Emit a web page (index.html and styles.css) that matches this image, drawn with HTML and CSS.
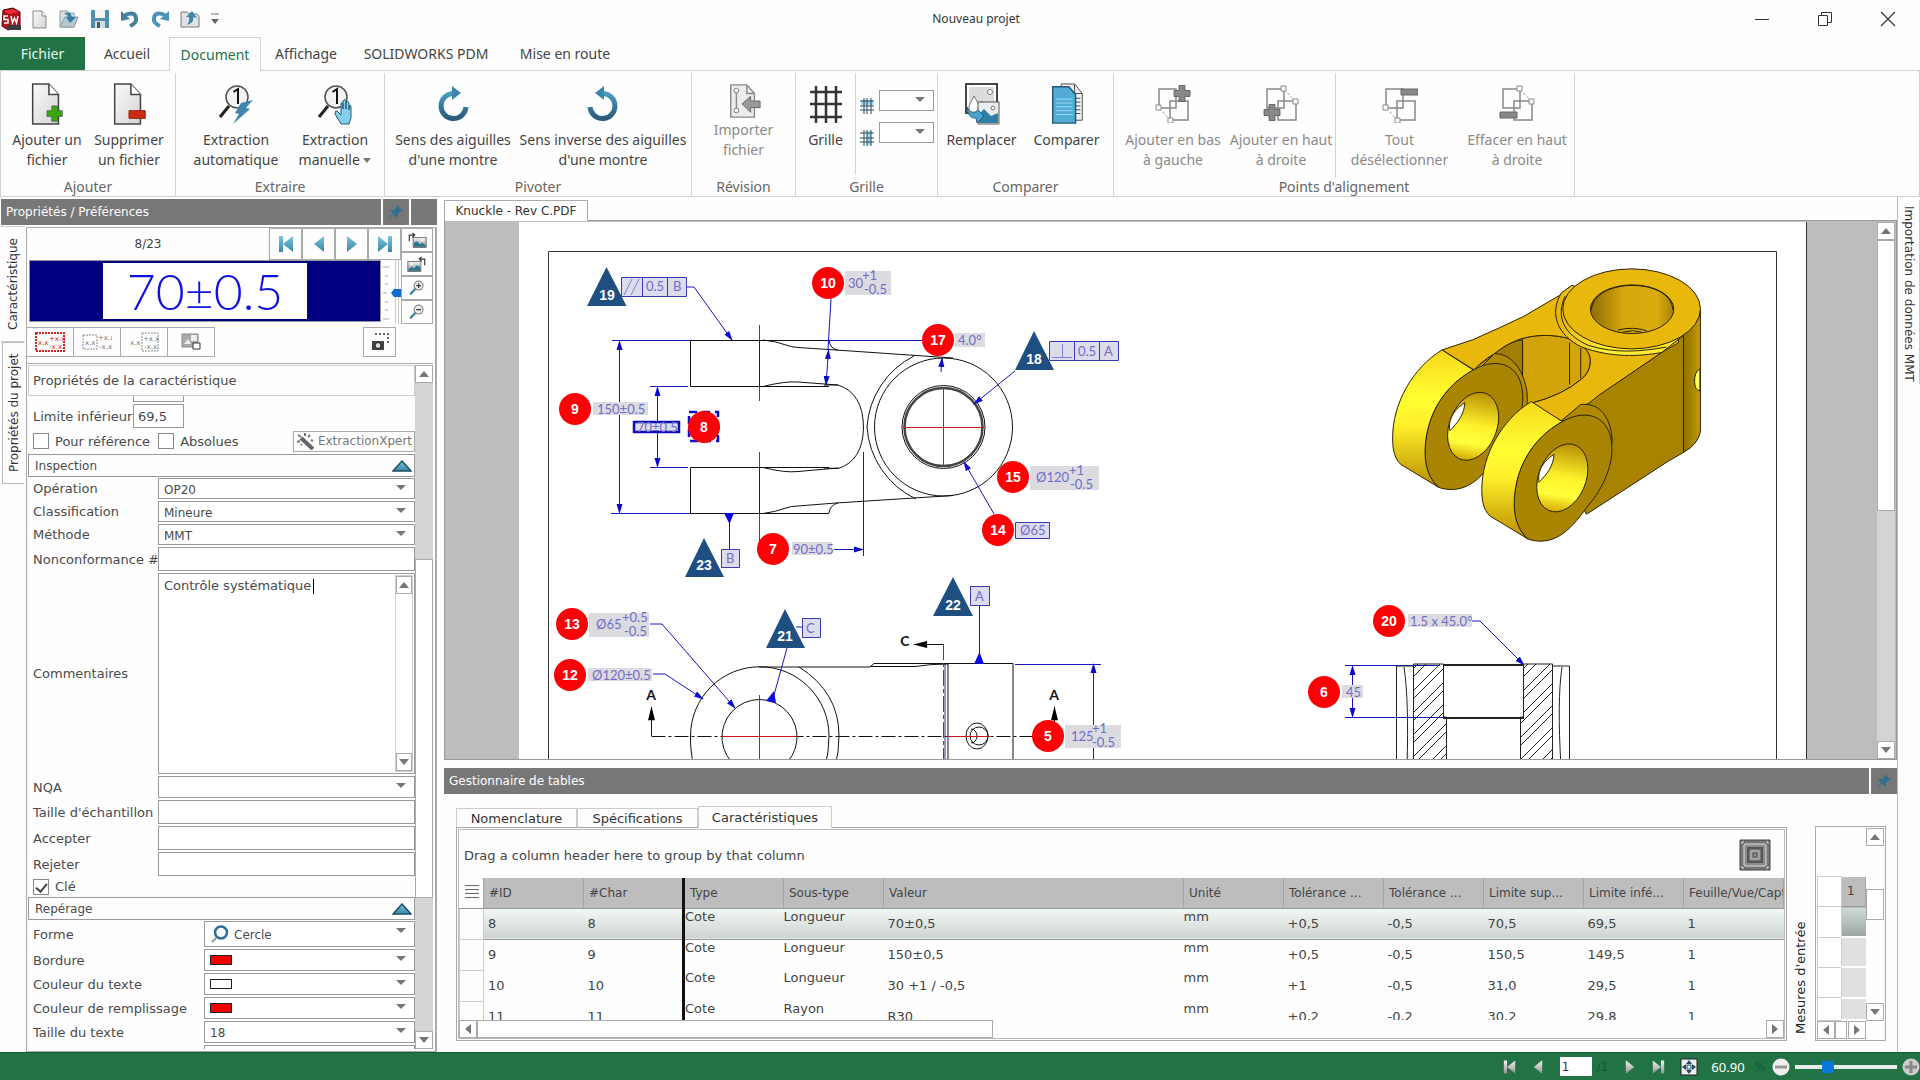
FILE: index.html
```html
<!DOCTYPE html>
<html lang="fr">
<head>
<meta charset="utf-8">
<title>Nouveau projet</title>
<link rel="stylesheet" href="styles.css">
</head>
<body>
<svg class="defs" width="0" height="0" aria-hidden="true">
  <defs>
    <linearGradient id="paper" x1="0" y1="0" x2="1" y2="1"><stop offset="0" stop-color="#fafafa"/><stop offset="1" stop-color="#d4d4d4"/></linearGradient>
    <linearGradient id="steel" x1="0" y1="0" x2="0" y2="1"><stop offset="0" stop-color="#4a9cc0"/><stop offset="1" stop-color="#2b5a78"/></linearGradient>
    <linearGradient id="sky" x1="0" y1="0" x2="0" y2="1"><stop offset="0" stop-color="#7cc4dd"/><stop offset="1" stop-color="#3a86a8"/></linearGradient>
    <linearGradient id="silver" x1="0" y1="0" x2="0" y2="1"><stop offset="0" stop-color="#f4f4f4"/><stop offset="1" stop-color="#8f8f8f"/></linearGradient>
    <linearGradient id="gold" x1="0" y1="0" x2="0" y2="1"><stop offset="0" stop-color="#f6d818"/><stop offset=".35" stop-color="#ffff32"/><stop offset=".55" stop-color="#fff02a"/><stop offset="1" stop-color="#b98c00"/></linearGradient>
    <linearGradient id="bore" x1="0" y1="0" x2="0" y2="1"><stop offset="0" stop-color="#b88f04"/><stop offset=".5" stop-color="#fff42c"/><stop offset=".75" stop-color="#ffff3c"/><stop offset="1" stop-color="#d6a800"/></linearGradient>
    <linearGradient id="cyl"><stop offset="0" stop-color="#8c6c00"/><stop offset=".4" stop-color="#d6a80c"/><stop offset=".8" stop-color="#d9ab0c"/><stop offset="1" stop-color="#a68200"/></linearGradient>
    <linearGradient id="edge"><stop offset="0" stop-color="#8f6f00"/><stop offset="1" stop-color="#c39a08"/></linearGradient>
    <linearGradient id="fillet"><stop offset="0" stop-color="#e3b20a"/><stop offset=".4" stop-color="#fff23a"/><stop offset="1" stop-color="#ffe52a"/></linearGradient>
    <marker id="arrow" viewBox="0 0 10 6" refX="9" refY="3" markerWidth="10" markerHeight="7" markerUnits="userSpaceOnUse" orient="auto-start-reverse"><path d="M0 0L10 3L0 6z" fill="#0a0ac8"/></marker>
    <marker id="arrow-black" viewBox="0 0 16 8" refX="15" refY="4" markerWidth="16" markerHeight="7" markerUnits="userSpaceOnUse" orient="auto"><path d="M0 0L16 4L0 8z"/></marker>
    <pattern id="hatch" width="22" height="22" patternUnits="userSpaceOnUse"><path d="M-1 23L23 -1M-1 15L15 -1M13 23L23 13" stroke="#222" fill="none"/></pattern>
  </defs>
  <symbol id="i-doc" viewBox="0 0 36 44"><path d="M3 1H20L30 12V43H3z" fill="url(#paper)" stroke="#444" stroke-width="1.6"/><path d="M20 1V12H30" fill="#fff" stroke="#444" stroke-width="1.6"/></symbol>
  <symbol id="i-loupe" viewBox="0 0 36 42"><circle cx="19" cy="14" r="11" fill="#f2f2f2" stroke="#555" stroke-width="1.6"/><path d="M11 23L2 34" stroke="#222" stroke-width="3"/><path d="M15.500 9L20 6V21" fill="none" stroke="#111" stroke-width="2"/></symbol>
  <symbol id="i-rotate" viewBox="0 0 32 38"><path d="M16 8.500A12.500 12.500 0 1 0 29 22" fill="none" stroke="url(#steel)" stroke-width="5"/><path d="M15 1L24 8L15 15z" fill="#3a87ab"/></symbol>
  <symbol id="i-align" viewBox="0 0 36 38"><path d="M4 4H21V23H4zM15 16H33V35H15z" fill="none" stroke="#888" stroke-width="1.500"/><path d="M4 23L16 36" stroke="#999" stroke-dasharray="3 2"/><path d="M1 20h5v5H1zM13 33h5v5h-5z" fill="#fff" stroke="#888"/></symbol>
  <symbol id="i-align2" viewBox="0 0 36 38"><path d="M4 4H21V23H4zM15 16H33V35H15z" fill="none" stroke="#888" stroke-width="1.500"/><path d="M21 4L33 17" stroke="#999" stroke-dasharray="3 2"/><path d="M18 1h5v5h-5zM30 14h5v5h-5z" fill="#fff" stroke="#888"/></symbol>
  <symbol id="i-plus" viewBox="0 0 18 18"><path d="M6 1h6v5h5v6h-5v5H6v-5H1V6h5z" stroke="#555" stroke-width=".8"/></symbol>
  <symbol id="i-pin" viewBox="0 0 16 16"><path d="M9 1L15 7L12.500 7.500L10 10L9.500 14L6 10.500L1 15L5 9.500L2 6L6 6L8.500 3.500z" fill="#2f6f90"/></symbol>
  <symbol id="i-next" viewBox="0 0 12 18"><path d="M1 1L11 9L1 17z"/></symbol>
  <symbol id="i-last" viewBox="0 0 16 18"><path d="M1 1L11 9L1 17zM11 1h4v16h-4z"/></symbol>
  <symbol id="i-photo" viewBox="0 0 26 20"><path d="M8 6H25V19H8z" fill="url(#silver)" stroke="#555"/><path d="M9 18V13L13 11L17 15L20 13L24 16V18z" fill="#2f7692"/><circle cx="20" cy="9.500" r="1.500" fill="#fff"/><path d="M3 11V3H9M7 0L10 3L7 6" fill="none" stroke="#333" stroke-width="1.500"/></symbol>
  <symbol id="i-zoom" viewBox="0 0 20 20"><circle cx="12" cy="7" r="5.500" fill="#e8eef0" stroke="#888" stroke-width="1.500"/><path d="M8 11L1.500 18" stroke="#46809a" stroke-width="3"/><path d="M9 7h6" stroke="#333" stroke-width="1.500"/></symbol>
</svg>

<header class="titlebar">
  <div class="quick">
    <svg width="22" height="24" viewBox="0 0 22 24"><path d="M3 3L13 1L20 5V20L8 23L2 19z" fill="#b3121a" stroke="#520508"/><path d="M4 4L13 2L19 5L9 7z" fill="#ee2b2f"/><path d="M8 9H4V12.500H8V16H4M11 9L12.500 16L14.500 11L16.500 16L18 9" fill="none" stroke="#fff" stroke-width="1.500"/><path d="M8 18H21V23H8z" fill="#3a3a3a"/></svg>
    <button aria-label="Nouveau"><svg width="16" height="20" viewBox="0 0 16 20"><path d="M1 2H10L14 7V19H1z" fill="url(#paper)" stroke="#888"/><path d="M10 2V7H14" fill="#fff" stroke="#888"/></svg></button>
    <button aria-label="Ouvrir"><svg width="22" height="20" viewBox="0 0 22 20"><path d="M2 2H9L11 4H16V18H2z" fill="#d8dde0" stroke="#8a9aa3"/><path d="M2 18L7 8H20L16 18z" fill="#b9c8d0" stroke="#8a9aa3"/><path d="M6 5Q12 1 14 8H18L12 14L8 8H10Q10 5 6 5" fill="#2f7ea3"/></svg></button>
    <button aria-label="Enregistrer"><svg width="20" height="20" viewBox="0 0 20 20"><path d="M1 1H19V19H1z" fill="#4f8fb0"/><path d="M5 1H15V9H5z" fill="#f2f4f5"/><path d="M5 12H15V19H5z" fill="#d5dde0"/><path d="M7 13H10V19H7z" fill="#335f77"/></svg></button>
    <button aria-label="Annuler"><svg width="20" height="18" viewBox="0 0 20 18"><path d="M5 5Q15 1 16 8Q17 13 10 16" fill="none" stroke="#46809f" stroke-width="4"/><path d="M1 1L1 11L10 9z" fill="#46809f"/></svg></button>
    <button aria-label="Rétablir"><svg class="flip" width="20" height="18" viewBox="0 0 20 18"><path d="M5 5Q15 1 16 8Q17 13 10 16" fill="none" stroke="#4a93b8" stroke-width="4"/><path d="M1 1L1 11L10 9z" fill="#4a93b8"/></svg></button>
    <button aria-label="Recharger"><svg width="20" height="18" viewBox="0 0 20 18"><path d="M1 2H7L9 4H17L19 6V17H1z" fill="#dfe3e5" stroke="#777"/><path d="M7 15Q15 12 13 7L17 8L12 1L6 7H9Q10 11 7 15" fill="#3d86a8"/></svg></button>
    <button aria-label="Personnaliser"><svg width="10" height="12" viewBox="0 0 10 12"><path d="M1 1H9" stroke="#777"/><path d="M1 6H9L5 11z" fill="#666"/></svg></button>
  </div>
  <h1 class="app-title">Nouveau projet</h1>
  <div class="winbtns">
    <button aria-label="Réduire"><svg width="16" height="16" viewBox="0 0 16 16"><path d="M1 8.500H15" stroke="#333"/></svg></button>
    <button aria-label="Restaurer"><svg width="16" height="16" viewBox="0 0 16 16"><path d="M1.500 4.500H10.500V14.500H1.500zM4.500 4V1.500H14.500V11.500H11" fill="none" stroke="#333"/></svg></button>
    <button aria-label="Fermer"><svg width="16" height="16" viewBox="0 0 16 16"><path d="M1 1L15 15M15 1L1 15" stroke="#333" stroke-width="1.200"/></svg></button>
  </div>
</header>

<nav class="tabs">
  <a href="#" class="tab file">Fichier</a><a href="#" class="tab home">Accueil</a><a href="#" class="tab current">Document</a><a href="#" class="tab view">Affichage</a><a href="#" class="tab pdm">SOLIDWORKS PDM</a><a href="#" class="tab start">Mise en route</a>
</nav>

<section class="ribbon">
  <div class="group g-add">
    <div class="tools">
      <button class="tool w82"><svg width="36" height="44" viewBox="0 0 36 44"><use href="#i-doc"/><g fill="#3aa80c"><use href="#i-plus" x="17" y="22" width="18" height="20"/></g></svg>Ajouter un<br>fichier</button>
      <button class="tool w82"><svg width="36" height="44" viewBox="0 0 36 44"><use href="#i-doc"/><path d="M18 29H35V37H18z" fill="#cf2a0e" stroke="#8d1c08"/></svg>Supprimer<br>un fichier</button>
    </div>
    <div class="group-name">Ajouter</div>
  </div>
  <div class="group g-extract">
    <div class="tools">
      <button class="tool w110"><svg width="36" height="42" viewBox="0 0 36 42"><use href="#i-loupe"/><path d="M23 20L35 17L28 25L32 26L15 41L21 31L17 30z" fill="#3f87ad"/></svg>Extraction<br>automatique</button>
      <button class="tool w88"><svg width="36" height="42" viewBox="0 0 36 42"><use href="#i-loupe"/><path d="M20 28L24 32V21Q24 18 26 21V26V18Q28 15 29 18V26V19Q31 17 32 20V27V23Q34 21 34 24V35L32 41H24L18 31Q18 27 20 28" fill="#85cfee" stroke="#285a78"/></svg>Extraction<br><span>manuelle <i class="caret"></i></span></button>
    </div>
    <div class="group-name">Extraire</div>
  </div>
  <div class="group g-rotate">
    <div class="tools">
      <button class="tool w136"><svg width="36" height="42" viewBox="0 0 36 42"><use href="#i-rotate" x="2" y="2" width="32" height="38"/></svg>Sens des aiguilles<br>d'une montre</button>
      <button class="tool w164"><svg class="flip" width="36" height="42" viewBox="0 0 36 42"><use href="#i-rotate" x="2" y="2" width="32" height="38"/></svg>Sens inverse des aiguilles<br>d'une montre</button>
    </div>
    <div class="group-name">Pivoter</div>
  </div>
  <div class="group g-rev">
    <div class="tools">
      <button class="tool w110 off small"><svg width="36" height="38" viewBox="0 0 36 38"><path d="M4 2H21L29 11V36H4z" fill="#ececec" stroke="#888" stroke-width="1.500"/><path d="M21 2V11H29M10 8V28" fill="none" stroke="#888" stroke-width="1.500"/><circle cx="10" cy="8" r="2.500" fill="#fff" stroke="#777"/><circle cx="10" cy="29" r="2.500" fill="#fff" stroke="#777"/><path d="M16 22L25 14V19H35V26H25V31z" fill="#999" stroke="#666"/></svg>Importer<br>fichier</button>
    </div>
    <div class="group-name">Révision</div>
  </div>
  <div class="group g-grid">
    <div class="tools">
      <button class="tool w58"><svg width="34" height="42" viewBox="0 0 34 42"><path d="M7 3V40M17 3V40M27 3V40M1 9H33M1 21H33M1 34H33" stroke="#333" stroke-width="2.500"/></svg>Grille</button>
      <div class="grid-steps">
        <label><svg width="14" height="16" viewBox="0 0 14 16"><path d="M1 2H13V7H1z" fill="#9cd6f0"/><path d="M4 0V16M7 0V16M11 0V16M0 3H14M0 8H14M0 12H14" stroke="#2b4a5a"/></svg><span class="combo"><select aria-label="Pas horizontal"><option></option></select></span></label>
        <label><svg width="14" height="16" viewBox="0 0 14 16"><path d="M7 1H11V15H7z" fill="#9cd6f0"/><path d="M4 0V16M7 0V16M11 0V16M0 3H14M0 8H14M0 12H14" stroke="#2b4a5a"/></svg><span class="combo"><select aria-label="Pas vertical"><option></option></select></span></label>
      </div>
    </div>
    <div class="group-name">Grille</div>
  </div>
  <div class="group g-compare">
    <div class="tools">
      <button class="tool w82"><svg width="36" height="42" viewBox="0 0 36 42"><path d="M2 1H33V30H2z" fill="#fff" stroke="#444" stroke-width="2"/><path d="M5 4H30V28H5z" fill="#dcdcdc"/><circle cx="26" cy="9" r="2.500" fill="#fff" stroke="#777"/><path d="M5 23L10 13L15 22L18 18V30H5z" fill="#fff" stroke="#777"/><path d="M14 19H35V41H14z" fill="#e9eef0" stroke="#555"/><path d="M15 40V31L20 26L27 33L34 30V40z" fill="#2f7ea5"/><path d="M3 24Q8 33 14 27L20 33L13 40L12 35Q4 36 3 24" fill="#4aa3cc" stroke="#2c5c76"/><circle cx="29" cy="25" r="2" fill="#fff" stroke="#777"/></svg>Remplacer</button>
      <button class="tool w88"><svg width="36" height="44" viewBox="0 0 36 44"><path d="M12 1H26L34 11V39H12z" fill="#f3f3f3" stroke="#444"/><path d="M26 1V11H34M26 16H32M26 20H32M26 24H32M26 28H32M26 32H32" stroke="#444" fill="none"/><path d="M3 4H20L27 12V42H3z" fill="#52abd4" stroke="#1f5775" stroke-width="1.500"/><path d="M6 17H24M6 21H24M6 25H24M6 29H24M6 33H24" stroke="#9ddaf4"/></svg>Comparer</button>
    </div>
    <div class="group-name">Comparer</div>
  </div>
  <div class="group g-align">
    <div class="tools">
      <button class="tool w108 off"><svg width="36" height="42" viewBox="0 0 36 42"><use href="#i-align" y="2" height="38"/><g fill="#888"><use href="#i-plus" x="18" y="1" width="18" height="19"/></g></svg>Ajouter en bas<br>à gauche</button>
      <button class="tool w108 off"><svg width="36" height="42" viewBox="0 0 36 42"><use href="#i-align2" y="2" height="38"/><g fill="#888"><use href="#i-plus" x="0" y="20" width="18" height="19"/></g></svg>Ajouter en haut<br>à droite</button>
      <button class="tool w128 off split"><svg width="36" height="42" viewBox="0 0 36 42"><use href="#i-align" y="2" height="38"/><path d="M19 6H36V12H19z" fill="#888" stroke="#666"/></svg>Tout<br>désélectionner</button>
      <button class="tool w108 off"><svg width="36" height="42" viewBox="0 0 36 42"><use href="#i-align2" y="2" height="38"/><path d="M1 29H18V35H1z" fill="#888" stroke="#666"/></svg>Effacer en haut<br>à droite</button>
    </div>
    <div class="group-name">Points d'alignement</div>
  </div>
</section>

<main class="work">
  <aside class="props">
    <div class="bar"><h2>Propriétés / Préférences</h2><button aria-label="Épingler"><svg width="16" height="16"><use href="#i-pin"/></svg></button><button aria-label="Fermer"></button></div>
    <div class="props-body">
      <div class="side-tabs"><button class="vtab one">Caractéristique</button><button class="vtab two">Propriétés du projet</button></div>
      <div class="panel">
        <div class="viewer">
          <div class="viewer-main">
            <div class="nav"><span class="count">8/23</span>
              <button aria-label="Premier"><svg class="flip" width="16" height="18" fill="url(#sky)"><use href="#i-last"/></svg></button>
              <button aria-label="Précédent"><svg class="flip" width="12" height="18" fill="url(#sky)"><use href="#i-next"/></svg></button>
              <button aria-label="Suivant"><svg width="12" height="18" fill="url(#sky)"><use href="#i-next"/></svg></button>
              <button aria-label="Dernier"><svg width="16" height="18" fill="url(#sky)"><use href="#i-last"/></svg></button>
            </div>
            <div class="shot-row"><div class="shot"><span>70±0.5</span></div>
              <svg width="18" height="64" viewBox="0 0 18 64"><path d="M0 7H6M2 16H5M2 24H5M0 33H4M2 42H5M2 50H5M0 59H6" stroke="#aaa"/><path d="M12.500 0V64M15.500 0V64" stroke="#ccc"/><path d="M8 33L11 29H18V37H11z" fill="#0a6ad0"/></svg></div>
          </div>
          <div class="viewer-side">
            <button aria-label="Pivoter à droite"><svg width="20" height="17"><use href="#i-photo"/></svg></button>
            <button aria-label="Pivoter à gauche"><svg class="flip" width="20" height="17"><use href="#i-photo"/></svg></button>
            <button aria-label="Zoom avant"><svg width="16" height="18" viewBox="0 0 20 20"><use href="#i-zoom"/><path d="M12 4V10" stroke="#333" stroke-width="1.500"/></svg></button>
            <button aria-label="Zoom arrière"><svg width="16" height="18"><use href="#i-zoom"/></svg></button>
          </div>
        </div>
        <div class="mini-tools">
          <button class="red" aria-label="Tout"><svg width="30" height="20" viewBox="0 0 30 20"><path d="M1 1H29V19H1z" fill="none" stroke="#d22" stroke-width="2" stroke-dasharray="2 1"/><text x="3" y="13">x.x</text><text x="14" y="9">+x.x</text><text x="14" y="17">-x.x</text></svg></button>
          <button aria-label="Nominal"><svg width="30" height="20" viewBox="0 0 30 20"><path d="M1 3H15V17H1z" fill="none" stroke="#888" stroke-dasharray="2 1"/><text x="3" y="13">x.x</text><text x="16" y="8">+x.x</text><text x="17" y="17">-x.x</text></svg></button>
          <button aria-label="Tolérance"><svg width="30" height="20" viewBox="0 0 30 20"><path d="M13 1H29V19H13z" fill="none" stroke="#888" stroke-dasharray="2 1"/><text x="1" y="13">x.x</text><text x="14" y="9">+x.x</text><text x="15" y="17">-x.x</text></svg></button>
          <button aria-label="Image"><svg width="20" height="18" viewBox="0 0 20 18"><path d="M1 1H17V14H1z" fill="#aaa" stroke="#888"/><path d="M10 2H16V8H10z" fill="#eee"/><path d="M3 11L7 6L10 11z" fill="#eee"/><path d="M12 10H19V16H12z" fill="#fff" stroke="#333"/></svg></button>
          <button class="cam" aria-label="Capture"><svg width="18" height="18" viewBox="0 0 18 18"><path d="M4 1H17V11" fill="none" stroke="#333" stroke-dasharray="2 2" stroke-width="1.500"/><path d="M1 8H13V17H1z" fill="#444"/><circle cx="7" cy="12.500" r="3" fill="#ddd" stroke="#111"/></svg></button>
        </div>
        <div class="scroller">
          <form class="form">
            <h3 class="head big">Propriétés de la caractéristique</h3>
            <div class="cut"><i></i></div>
            <div class="row lim"><label for="lim">Limite inférieur</label><input id="lim" value="69,5"></div>
            <div class="row checks"><label><input type="checkbox"><span>Pour référence</span></label><label><input type="checkbox"><span>Absolues</span></label>
              <button type="button" class="xpert"><svg width="18" height="18" viewBox="0 0 18 18"><path d="M5 6L17 17" stroke="#666" stroke-width="4"/><path d="M2 3L5 5M9 1L9 4M14 3L12 5M1 10L4 9M15 8L17 9M5 13L6 12" stroke="#777" stroke-width="2"/></svg>ExtractionXpert</button></div>
            <h3 class="head">Inspection<svg width="20" height="12" viewBox="0 0 20 12"><path d="M1 11L10 1L19 11z" fill="url(#sky)" stroke="#1f4f66" stroke-width="1.500"/></svg></h3>
            <div class="fields">
              <div class="row h21"><label for="op">Opération</label><span class="combo"><select id="op"><option>OP20</option></select></span></div>
              <div class="row h21"><label for="cl">Classification</label><span class="combo"><select id="cl"><option>Mineure</option></select></span></div>
              <div class="row h21"><label for="me">Méthode</label><span class="combo"><select id="me"><option>MMT</option></select></span></div>
              <div class="row h24"><label for="nc">Nonconformance #</label><input id="nc"></div>
              <div class="row notes"><label for="co">Commentaires</label><div class="area"><textarea id="co">Contrôle systématique</textarea><i class="cursor"></i><div class="vbar"><button type="button" class="up" aria-label="Haut"></button><button type="button" class="down" aria-label="Bas"></button></div></div></div>
              <div class="row h22"><label for="nq">NQA</label><span class="combo"><select id="nq"><option></option></select></span></div>
              <div class="row h24"><label for="ta">Taille d'échantillon</label><input id="ta"></div>
              <div class="row h24"><label for="ac">Accepter</label><input id="ac"></div>
              <div class="row h24"><label for="re">Rejeter</label><input id="re"></div>
            </div>
            <div class="row key"><label><input type="checkbox" checked><span>Clé</span></label></div>
            <h3 class="head">Repérage<svg width="20" height="12" viewBox="0 0 20 12"><path d="M1 11L10 1L19 11z" fill="url(#sky)" stroke="#1f4f66" stroke-width="1.500"/></svg></h3>
            <div class="fields wide">
              <div class="row h26"><label for="fo">Forme</label><span class="combo"><svg width="18" height="18" viewBox="0 0 18 18"><circle cx="10" cy="7.500" r="6" fill="none" stroke="#2f6f9a" stroke-width="2.500"/><path d="M5 13L1 17" stroke="#999" stroke-width="2"/></svg><select id="fo"><option>Cercle</option></select></span></div>
              <div class="row h22"><label for="bo">Bordure</label><span class="combo"><i class="chip red"></i><select id="bo"><option></option></select></span></div>
              <div class="row h22"><label for="ct">Couleur du texte</label><span class="combo"><i class="chip"></i><select id="ct"><option></option></select></span></div>
              <div class="row h22"><label for="cr">Couleur de remplissage</label><span class="combo"><i class="chip red"></i><select id="cr"><option></option></select></span></div>
              <div class="row h22"><label for="tt">Taille du texte</label><span class="combo"><select id="tt"><option>18</option></select></span></div>
              <div class="row h22"><span></span><span class="combo"></span></div>
            </div>
          </form>
          <div class="vbar main"><button class="up" aria-label="Haut"></button><i class="thumb"></i><button class="down" aria-label="Bas"></button></div>
        </div>
      </div>
    </div>
  </aside>

  <section class="center">
    <div class="doc-tabs"><button class="doc-tab">Knuckle - Rev C.PDF</button></div>
    <div class="viewport">
      <div class="sheet"><svg width="1432" height="545" viewBox="445 222 1432 545" role="img" aria-label="Plan Knuckle">
        <path d="M519 222H1806V767H519z" fill="#fff"/>
        <path d="M1806.500 222V767" stroke="#333"/>
        <path d="M548.500 767V251.500H1776.500V767" fill="none" stroke="#333"/>
        <g fill="none" stroke="#111" stroke-width="1">
          <path d="M829 340.500H690.500V386.500H829M829 467.500H690.500V513.500H829"/>
          <path d="M763 340Q775 341 786 345Q791 347 798 347.500L836 350L953 358M829 340Q830 349 838 350M763 386.500Q785 381 798 382L838 385M763 467.500Q785 473 798 471.500L838 468M763 513.500Q775 512 786 508Q791 506 798 506L836 503L953 495.500M829 513Q830 505 838 503"/>
          <path d="M824 385L838 385Q863 393 863.500 427Q863 461 838 468.500L824 468"/>
          <path d="M914 356A86 86 0 0 0 867 427A86 86 0 0 0 916 499"/>
          <circle cx="943.500" cy="427" r="69"/><circle cx="943.500" cy="427" r="41.500"/><circle cx="943.500" cy="427" r="39" stroke="#444" stroke-width="2.500"/>
          <path d="M694 767Q690 750 690.500 736A69 69 0 0 1 829 736Q829 752 825 767M799 667Q839 692 839 736Q839 752 835 767M759 667H870L874 663.500H1013V767M870 666.500H915Q930 664 948 664V767"/>
          <path d="M737 767A37.500 37.500 0 1 1 782 767"/>
          <circle cx="979" cy="736" r="9"/><ellipse cx="977" cy="736" rx="11" ry="13"/><path d="M971 729A6 7 0 1 1 971 743"/>
          <path d="M651.500 736.500H1034" stroke-dasharray="14 3 3 3"/>
        </g>
        <path d="M759.500 325V401M759.500 452V540M903 427.500H984M943.500 387V466M759.500 695V767M722 736.500H797M948 736.500H990" stroke="#c9141c"/>
        <path d="M759.500 340V386M759.500 467V513" stroke="#222"/>
        <path d="M943.500 644V767" stroke="#c9141c" stroke-dasharray="16 3 4 3"/><path d="M945 664V767" stroke="#303070"/>
        <g fill="none" stroke="#1616c0" stroke-width="1">
          <path d="M612 340.500H690M611 513.500H690M650 386.500H688M650 467.500H688M829 340.500H924M863.500 452V556M759.500 540V550M1015 664.500H1101"/>
          <g marker-start="url(#arrow)" marker-end="url(#arrow)"><path d="M619.500 341V513"/><path d="M657.500 387V467"/><path d="M826 385L828.500 350"/><path d="M1352.500 666V717"/></g>
          <path d="M831 299L828 349"/>
          <g marker-end="url(#arrow)"><path d="M687 287H694L732 340"/><path d="M941 372L942 358"/><path d="M1015 371L974 404"/><path d="M994 514L964 462"/><path d="M834 549.500H863"/><path d="M650 624H662L735 708"/><path d="M653 674H665L703 699"/><path d="M1093.500 767V664"/><path d="M1472 621H1480L1524 665"/></g>
          <path d="M729.500 523V549M979.500 606V656M787 648L774 695M796 627H802M1345 665.500H1440M1345 717.500H1443"/>
        </g>
        <path d="M724 513H734L729.500 524zM974 664L979.500 652L984 664zM774 691L766 701L776 703z" fill="#0a0ae0"/>
        <g fill="none" stroke="#111" marker-end="url(#arrow-black)"><path d="M943 644.500H914"/><path d="M651.500 736V707"/><path d="M1054.500 736V707"/></g>
        <g fill="none" stroke="#222">
          <path d="M1396.500 767V666H1413M1404 667Q1409 700 1407 767M1552 666H1569.500V767M1562 667Q1557 700 1561 767"/>
          <path d="M1413.500 767V664H1443.500V717H1446.500V767z" fill="url(#hatch)"/>
          <path d="M1552.500 767V664H1523.500V717H1520.500V767z" fill="url(#hatch)"/>
          <path d="M1443 664.500H1524M1443 665.500H1524"/><path d="M1443 718H1524" stroke-width="2"/>
        </g>
        <g>
          <path d="M845 271H891V295H845zM955 333H985V347H955zM593 402H648V415H593zM1030 466H1099V490H1030zM792 542H832V555H792zM589 613H649V637H589zM588 668H652V681H588zM1065 725H1121V748H1065zM1408 614H1472V627H1408zM1342 685H1363V698H1342z" fill="#dcdce0"/>
          <path d="M621.500 277.500H686.500V296.500H621.500zM642.500 277V296M667.500 277V296M1049.500 341.500H1118.500V360.500H1049.500zM1074.500 341V360M1099.500 341V360M1015.500 522.500H1049.500V538.500H1015.500zM721.500 549.500H739.500V567.500H721.500zM970.500 586.500H989.500V605.500H970.500zM802.500 618.500H820.500V637.500H802.500z" fill="#dcdcec" stroke="#3a3ab0"/>
          <path d="M634 422H679V432H634z" fill="#dcdcec" stroke="#0c0cb8" stroke-width="2.500"/>
          <path d="M689 412H718V441H689z" fill="none" stroke="#0c0cc8" stroke-width="2.500" stroke-dasharray="8 5"/>
          <path d="M624 295L632 279M631 295L639 279M1052 357.500H1072M1062.500 357V344" stroke="#7f7dd0"/>
        </g>
        <g class="dims">
          <text x="646" y="291">0.5</text><text x="673" y="291">B</text>
          <text x="848" y="288">30</text><text x="862" y="280">+1</text><text x="864" y="294">-0.5</text>
          <text x="958" y="345">4.0°</text><text x="1078" y="356">0.5</text><text x="1104" y="356">A</text>
          <text x="597" y="414">150±0.5</text><text x="637" y="432">70±0.5</text>
          <text x="1036" y="482">Ø120</text><text x="1069" y="475">+1</text><text x="1070" y="489">-0.5</text>
          <text x="1020" y="535">Ø65</text><text x="793" y="554">90±0.5</text><text x="726" y="563">B</text>
          <text x="596" y="629">Ø65</text><text x="622" y="622">+0.5</text><text x="624" y="636">-0.5</text>
          <text x="592" y="680">Ø120±0.5</text><text x="806" y="633">C</text><text x="975" y="601">A</text>
          <text x="1071" y="741">125</text><text x="1092" y="733">+1</text><text x="1092" y="747">-0.5</text>
          <text x="1410" y="626">1.5 x 45.0°</text><text x="1346" y="697">45</text>
        </g>
        <g class="marks"><text x="651" y="700">A</text><text x="1054" y="700">A</text><text x="905" y="646">C</text></g>
        <g fill="#1f4e80"><path d="M606.500 267L626.500 306H587z"/><path d="M1034 331L1054 370H1015z"/><path d="M704 538L724 577H685z"/><path d="M785 609L805 648H766z"/><path d="M953 577L973 616H933z"/></g>
        <g fill="#fb0207"><circle cx="828" cy="283" r="16"/><circle cx="938" cy="340" r="16"/><circle cx="575" cy="409" r="16"/><circle cx="704" cy="427" r="16"/><circle cx="1013" cy="477" r="16"/><circle cx="998" cy="530" r="16"/><circle cx="773" cy="549" r="16"/><circle cx="572" cy="624" r="16"/><circle cx="570" cy="675" r="16"/><circle cx="1048" cy="736" r="16"/><circle cx="1389" cy="621" r="16"/><circle cx="1324" cy="692" r="16"/></g>
        <g class="nums">
          <text x="828" y="288">10</text><text x="938" y="345">17</text><text x="575" y="414">9</text><text x="704" y="432">8</text><text x="1013" y="482">15</text><text x="998" y="535">14</text><text x="773" y="554">7</text><text x="572" y="629">13</text><text x="570" y="680">12</text><text x="1048" y="741">5</text><text x="1389" y="626">20</text><text x="1324" y="697">6</text>
          <text x="607" y="300">19</text><text x="1034" y="364">18</text><text x="704" y="570">23</text><text x="785" y="641">21</text><text x="953" y="610">22</text>
        </g>
        <g class="solid" transform="translate(1160 190) scale(.4847 .3635)">
          <path d="M1080 398Q1115 365 1115 330V665Q1110 700 1080 722z" fill="url(#edge)"/>
          <path d="M1035 447L1080 400V722L1050 745L880 892L800 700L828 635L865 600z" fill="#a88302"/>
          <path d="M690 450C710 425 745 400 795 400C850 400 888 430 888 470Q888 500 870 520Q830 565 765 587L700 700L650 490z" fill="#d3a40a"/>
          <path d="M690 450C715 425 730 415 748 412V590L690 600z" fill="#a37e04"/>
          <path d="M748 412V600M845 420V535M868 435V518"/>
          <path d="M582 440L645 412Q700 380 750 348L828 287L850 265H1060L1070 420L1035 447L905 565Q885 590 865 600L828 635L765 587Q830 565 870 520Q888 500 888 470C888 430 850 400 795 400C740 400 710 430 690 450Q660 475 648 495z" fill="#e8b80c"/>
          <path d="M828 283C802 340 820 400 870 432C930 462 990 458 1035 447L1080 400L850 262z" fill="url(#fillet)"/>
          <path d="M836 292C815 350 835 400 885 428C940 450 990 445 1045 432"/>
          <ellipse cx="973" cy="327" rx="142" ry="110" fill="#e8b80c"/>
          <ellipse cx="974" cy="328" rx="86" ry="67" fill="url(#cyl)"/>
          <path d="M890 330C895 240 1055 240 1058 330M945 385Q975 375 1004 387M955 391Q975 383 994 391"/>
          <path d="M1114 492Q1102 500 1103 530Q1104 552 1114 552z" fill="#ffff60"/>
          <path d="M690 450C740 450 765 540 756 600L700 640L660 490z" fill="#b08a04"/>
          <path d="M868 590C905 585 930 620 933 690L925 760L860 640L828 635z" fill="#b08a04"/>
          <g id="lug">
            <path d="M646 495C700 455 745 485 748 560C752 610 730 680 700 725C665 790 640 822 603 824C590 824 583 822 575 818C560 800 545 770 547 710C550 620 585 540 646 495z" fill="#aa8403"/>
            <path d="M582 440L646 495C585 540 550 620 547 710C545 770 560 800 575 818L497 755C480 735 480 700 480 680C480 590 520 490 582 440z" fill="url(#gold)"/>
            <g transform="rotate(12 646 650)"><ellipse cx="646" cy="650" rx="50" ry="95" fill="url(#bore)"/></g>
            <path d="M629 585C600 610 595 640 598 662C615 640 628 615 629 585z" fill="#fff"/>
          </g>
          <use href="#lug" x="184" y="142"/>
        </g>
      </svg></div>
      <div class="vbar page"><button class="up" aria-label="Haut"></button><i class="thumb"></i><button class="down" aria-label="Bas"></button></div>
    </div>

    <div class="bar tables-bar"><h2>Gestionnaire de tables</h2><button aria-label="Épingler"><svg width="16" height="16"><use href="#i-pin"/></svg></button></div>
    <div class="tables">
      <div class="tables-main">
        <div class="table-tabs"><button>Nomenclature</button><button>Spécifications</button><button class="on">Caractéristiques</button></div>
        <div class="grid-box"><div class="grid-inner">
          <div class="group-hint"><span>Drag a column header here to group by that column</span>
            <button aria-label="Réduire"><svg width="32" height="32" viewBox="0 0 32 32"><path d="M1 1H31V31H1z" fill="#777" stroke="#444"/><path d="M5 5H27V27H5z" fill="#8c8c8c" stroke="#ddd"/><path d="M9 9H23V23H9z" fill="#777" stroke="#555" stroke-width="2"/><path d="M12 12H20V20H12z" fill="none" stroke="#ccc"/><path d="M1 5L5 5V1M31 5H27V1M1 27H5V31M31 27H27V31M14 15H18L16 18z" fill="#ddd" stroke="#555"/></svg></button></div>
          <div class="grid-clip">
            <table>
              <colgroup><col class="c-sel"><col><col><col><col><col class="c-val"><col><col><col><col><col><col></colgroup>
              <thead><tr><th><svg width="14" height="14" viewBox="0 0 14 14"><path d="M0 1.500H14M0 5.500H14M0 9.500H14M0 13.500H14" stroke="#666"/></svg></th><th>#ID</th><th>#Char</th><th class="fix">Type</th><th>Sous-type</th><th>Valeur</th><th>Unité</th><th>Tolérance ...</th><th>Tolérance ...</th><th>Limite sup...</th><th>Limite infé...</th><th>Feuille/Vue/Capt</th></tr></thead>
              <tbody>
                <tr class="sel"><td></td><td>8</td><td>8</td><td class="fix top">Cote</td><td class="top">Longueur</td><td>70±0,5</td><td class="top">mm</td><td>+0,5</td><td>-0,5</td><td>70,5</td><td>69,5</td><td>1</td></tr>
                <tr><td></td><td>9</td><td>9</td><td class="fix top">Cote</td><td class="top">Longueur</td><td>150±0,5</td><td class="top">mm</td><td>+0,5</td><td>-0,5</td><td>150,5</td><td>149,5</td><td>1</td></tr>
                <tr><td></td><td>10</td><td>10</td><td class="fix top">Cote</td><td class="top">Longueur</td><td>30 +1 / -0,5</td><td class="top">mm</td><td>+1</td><td>-0,5</td><td>31,0</td><td>29,5</td><td>1</td></tr>
                <tr><td></td><td>11</td><td>11</td><td class="fix top">Cote</td><td class="top">Rayon</td><td>R30</td><td class="top">mm</td><td>+0,2</td><td>-0,2</td><td>30,2</td><td>29,8</td><td>1</td></tr>
              </tbody>
            </table>
          </div>
          <div class="hbar"><button class="left" aria-label="Gauche"></button><i class="thumb"></i><button class="right" aria-label="Droite"></button></div>
        </div></div>
      </div>
      <div class="measures">
        <div class="vlabel">Mesures d'entrée</div>
        <div class="measure-box">
          <div class="measure-col">
            <table><tbody><tr><td></td><th>1</th></tr><tr class="sel"><td></td><td></td></tr><tr><td></td><td></td></tr><tr><td></td><td></td></tr><tr><td></td><td></td></tr></tbody></table>
            <div class="hbar"><button class="left" aria-label="Gauche"></button><i class="thumb"></i><button class="right" aria-label="Droite"></button></div>
          </div>
          <div class="vbar meas"><button class="up" aria-label="Haut"></button><i class="thumb"></i><button class="down" aria-label="Bas"></button></div>
        </div>
      </div>
    </div>
  </section>
  <div class="right-tab"><button>Importation de données MMT</button></div>
</main>

<footer class="status">
  <button aria-label="Première page"><svg class="flip" width="13" height="18" viewBox="0 0 16 18" fill="url(#silver)"><use href="#i-last"/></svg></button>
  <button aria-label="Page précédente"><svg class="flip" width="10" height="16" viewBox="0 0 12 18" fill="url(#silver)"><use href="#i-next"/></svg></button>
  <span class="page-no"><input aria-label="Page" value="1"><span>/1</span></span>
  <button aria-label="Page suivante"><svg width="10" height="16" viewBox="0 0 12 18" fill="url(#silver)"><use href="#i-next"/></svg></button>
  <button aria-label="Dernière page"><svg width="13" height="18" viewBox="0 0 16 18" fill="url(#silver)"><use href="#i-last"/></svg></button>
  <button class="fit" aria-label="Ajuster"><svg width="18" height="18" viewBox="0 0 18 18"><path d="M1 1H17V17H1z" fill="#eee" stroke="#222"/><path d="M9 2L12 6H6zM9 16L12 12H6zM2 9L6 6V12zM16 9L12 6V12z" fill="#1d4a66"/><path d="M7 7h4v4H7z" fill="#fff" stroke="#1d4a66"/></svg></button>
  <span class="zoom">60.90</span><span class="pct">%</span>
  <button class="minus" aria-label="Zoom arrière"><svg width="18" height="18" viewBox="0 0 18 18"><circle cx="9" cy="9" r="8.500" fill="#eee"/><path d="M3 9H15" stroke="#999" stroke-width="3"/></svg></button>
  <input class="slider" type="range" min="0" max="100" value="30" aria-label="Zoom">
  <button aria-label="Zoom avant"><svg width="18" height="18" viewBox="0 0 18 18"><circle cx="9" cy="9" r="8.500" fill="#ccc"/><path d="M3 9H15M9 3V15" stroke="#888" stroke-width="3"/></svg></button>
</footer>
</body>
</html>
```
FILE: styles.css
```css
* { box-sizing: border-box; }
body { margin: 0; height: 100vh; display: flex; flex-direction: column; overflow: hidden; background: #fefefe; color: #444; font: 13px "DejaVu Sans", sans-serif; }
button, input, select, textarea { font: inherit; color: inherit; margin: 0; }
button { border: 0; background: none; padding: 0; display: flex; align-items: center; justify-content: center; }
h1, h2, h3 { margin: 0; font: inherit; }
svg { flex: none; }
i { display: block; }
.defs { position: absolute; }
.flip { transform: scaleX(-1); }

/* Title bar */
.titlebar { height: 37px; flex: none; display: grid; grid-template-columns: 1fr auto 1fr; align-items: center; font-family: "Noto Sans", sans-serif; color: #333; }
.quick { display: flex; align-items: center; gap: 10px; }
.app-title { font-size: 12px; padding-left: 32px; }
.winbtns { display: flex; justify-content: flex-end; gap: 47px; padding-right: 24px; }

/* Ribbon tabs */
.tabs { height: 34px; flex: none; display: flex; align-items: stretch; border-bottom: 1px solid #d0d0d0; font: 14px "Noto Sans", sans-serif; }
.tab { display: flex; align-items: center; justify-content: center; color: #444; text-decoration: none; white-space: nowrap; }
.file { width: 85px; background: #217346; color: #e8f4ec; }
.home { width: 84px; }
.current { width: 92px; border: 1px solid #d0d0d0; border-bottom: 0; margin-bottom: -1px; background: #fefefe; color: #217346; }
.view { width: 90px; }
.pdm { width: 150px; }
.start { width: 128px; }

/* Ribbon */
.ribbon { height: 126px; flex: none; display: flex; border: 1px solid #d0d0d0; border-top: 0; font: 14px/20px "Noto Sans", sans-serif; }
.group { display: flex; flex-direction: column; border-right: 1px solid #d4d4d4; margin-top: 2px; }
.tools { flex: 1; display: flex; justify-content: center; }
.tool { flex-direction: column; justify-content: flex-start; padding-top: 10px; white-space: nowrap; line-height: 20px; }
.tool svg { height: 42px; margin-bottom: 5px; }
.tool.small svg { height: 36px; margin-bottom: 1px; }
.tool.off { color: #8a8a8a; }
.split { border-left: 1px solid #d4d4d4; }
.w58 { width: 58px; } .w82 { width: 82px; } .w88 { width: 88px; } .w108 { width: 108px; } .w110 { width: 110px; } .w128 { width: 128px; } .w136 { width: 136px; } .w164 { width: 164px; }
.group-name { height: 18px; line-height: 18px; text-align: center; color: #666; }
.g-add { width: 175px; } .g-extract { width: 209px; } .g-rotate { width: 307px; } .g-rev { width: 104px; } .g-grid { width: 142px; } .g-compare { width: 176px; } .g-align { width: 461px; }
.g-rotate .tools { justify-content: flex-start; }
.g-align .tools { justify-content: flex-start; padding-left: 5px; }
.caret { display: inline-block; border: 4px solid transparent; border-top: 5px solid #777; border-bottom: 0; vertical-align: 2px; }
.grid-steps { border-left: 1px solid #d4d4d4; padding: 17px 3px 0 4px; margin-bottom: 4px; display: flex; flex-direction: column; gap: 11px; }
.grid-steps label { display: flex; align-items: center; gap: 5px; height: 21px; }
.grid-steps .combo { width: 55px; height: 21px; }
.grid-steps svg { margin-top: 10px; }

/* Combo boxes and text boxes */
.combo { position: relative; display: flex; align-items: center; border: 1px solid #999; background: #fff; min-width: 0; }
.combo::after { content: ""; position: absolute; right: 8px; top: 6px; border: 5px solid transparent; border-top-color: #777; border-bottom: 0; pointer-events: none; }
.combo select { appearance: none; border: 0; background: none; padding: 2px 0 0 5px; flex: 1; min-width: 0; height: 100%; font-size: 12px; outline: 0; }
.combo svg { margin-left: 6px; }
.row > input { border: 1px solid #999; background: #fff; padding: 0 4px; min-width: 0; outline: 0; border-radius: 0; }
input[type=checkbox] { appearance: none; width: 16px; height: 16px; border: 1px solid #888; background: #fff; display: grid; place-items: center; }
input[type=checkbox]:checked::before { content: ""; width: 5px; height: 9px; border: solid #444; border-width: 0 2px 2px 0; transform: rotate(40deg); }

/* Scroll bars */
.vbar { display: flex; flex-direction: column; background: #d4d4d4; width: 18px; }
.hbar { display: flex; height: 18px; flex: none; }
.vbar button, .hbar button { width: 18px; height: 18px; flex: none; border: 1px solid #aaa; background: #fff; }
.vbar .thumb, .hbar .thumb { background: #fff; border: 1px solid #aaa; }
.up::before, .down::before, .left::before, .right::before { content: ""; border: 5px solid transparent; }
.up::before { border-bottom: 6px solid #777; border-top: 0; }
.down::before { border-top: 6px solid #777; border-bottom: 0; }
.left::before { border-right: 6px solid #777; border-left: 0; }
.right::before { border-left: 6px solid #777; border-right: 0; }

/* Main area */
.work { flex: 1; min-height: 0; display: flex; }
.bar { display: flex; gap: 2px; height: 26px; flex: none; color: #fff; }
.bar h2 { flex: 1; background: #777; padding-left: 5px; font-size: 12px; line-height: 26px; }
.bar button { width: 26px; background: #777; }
.props { width: 437px; flex: none; display: flex; flex-direction: column; padding: 2px 0 0 1px; }
.props-body { flex: 1; min-height: 0; display: flex; }
.side-tabs { width: 25px; display: flex; flex-direction: column; padding-top: 1px; }
.vtab { writing-mode: vertical-rl; transform: rotate(180deg); border: 1px solid #ccc; border-left: 0; color: #333; font-size: 12px; }
.one { height: 116px; width: 24px; border-right: 0; }
.two { height: 142px; width: 22px; margin-left: 1px; border-color: #bbb; }
.panel { flex: 1; min-width: 0; display: flex; flex-direction: column; border: 1px solid #aaa; border-right-width: 2px; margin-top: 2px; padding-right: 2px; }
.viewer { display: flex; }
.viewer-main { flex: 1; display: flex; flex-direction: column; }
.viewer-side { width: 32px; }
.viewer-side button { width: 32px; height: 24px; border: 1px solid #aaa; }
.nav { display: flex; height: 32px; }
.nav button { width: 33px; border: 1px solid #aaa; }
.count { flex: 1; display: flex; align-items: center; justify-content: center; font-size: 12px; }
.shot-row { display: flex; gap: 2px; padding-left: 2px; }
.shot { flex: 1; height: 62px; background: navy; border: 1px solid #999; padding: 2px 73px; }
.shot span { display: block; height: 56px; background: #fff; color: #1010e0; font: 300 50px/56px Lato, sans-serif; text-align: center; }
.mini-tools { display: flex; height: 34px; padding: 2px 37px 2px 0; margin-top: 1px; }
.mini-tools button { width: 47px; border: 1px solid #aaa; border-left-width: 0; }
.mini-tools .cam { width: 33px; border-left-width: 1px; margin-left: auto; }
.mini-tools text { font: 7px "DejaVu Sans", sans-serif; fill: #777; }
.mini-tools .red text { fill: #d22; }
.scroller { flex: 1; min-height: 0; display: flex; border-top: 1px solid #aaa; margin-top: 4px; padding: 1px 0 2px 1px; }
.form { flex: 1; min-width: 0; overflow: hidden; color: #4a4a4a; }
.head { height: 23px; border: 1px solid #999; display: flex; align-items: center; justify-content: space-between; padding: 0 2px 0 6px; font-size: 12px; }
.head.big { height: 31px; border-color: #ccc; padding-left: 4px; font-size: 13px; }
.cut { height: 6px; padding-left: 105px; }
.cut i { width: 51px; height: 6px; border: 1px solid #999; border-top: 0; }
.row { display: grid; grid-template-columns: 125px 1fr; padding-left: 5px; }
.row label { display: flex; align-items: center; white-space: nowrap; }
.lim { grid-template-columns: 100px 51px; height: 24px; margin-top: 2px; }
.checks { display: flex; height: 26px; align-items: center; }
.checks label, .key label { gap: 6px; margin-right: 8px; }
.xpert { margin-left: auto; width: 122px; height: 21px; border: 1px solid #aaa; gap: 4px; font-size: 12px; color: #777; white-space: nowrap; }
.fields { display: grid; gap: 2px; padding-top: 1px; }
.wide .row { grid-template-columns: 171px 1fr; }
.h21 { height: 21px; } .h22 { height: 22px; } .h24 { height: 24px; } .h26 { height: 26px; }
.notes { height: 201px; }
.area { display: flex; border: 1px solid #999; background: #fff; padding: 1px; min-width: 0; position: relative; }
.area textarea { flex: 1; min-width: 0; border: 0; resize: none; padding: 3px 4px; outline: 0; overflow: hidden; background: none; }
.area .vbar { background: #fff; justify-content: space-between; border: 1px solid #ccc; }
.area .vbar button { width: 16px; }
.cursor { position: absolute; left: 154px; top: 5px; width: 1px; height: 15px; background: #000; }
.key { height: 21px; }
.chip { width: 22px; height: 10px; margin-left: 5px; border: 1px solid #222; background: #fff; }
.chip.red { background: #f00000; }
.vbar.main .thumb { margin-top: 176px; height: 339px; }
.vbar.main .down { margin-top: auto; }

/* Document viewer */
.center { flex: 1; min-width: 0; display: flex; flex-direction: column; padding-left: 7px; }
.doc-tabs { height: 24px; flex: none; border-bottom: 1px solid #999; padding-top: 3px; display: flex; }
.doc-tab { width: 144px; height: 21px; border: 1px solid #aaa; border-bottom: 0; background: #fefefe; font-size: 12px; color: #333; white-space: nowrap; }
.viewport { flex: 1; min-height: 0; display: flex; border: 1px solid #999; border-top: 0; background: #bdbdbd; padding: 1px 1px 0 0; }
.sheet { flex: 1; min-width: 0; overflow: hidden; }
.sheet svg { display: block; }
.page .thumb { height: 271px; }
.page .down { margin-top: auto; }
.dims { font: 13px Lato, sans-serif; fill: #6f6dc8; }
.marks { font: bold 14px Lato, sans-serif; text-anchor: middle; fill: #111; }
.nums { font: bold 14px "Liberation Sans", sans-serif; text-anchor: middle; fill: #fff; }
.solid { stroke: #2c2200; }
.solid path, .solid ellipse { vector-effect: non-scaling-stroke; }
.solid path:not([fill]) { fill: none; }

/* Tables manager */
.tables-bar { margin-top: 8px; }
.tables { height: 258px; flex: none; display: flex; padding: 12px 11px 11px 12px; }
.tables-main { flex: 1; min-width: 0; display: flex; flex-direction: column; }
.table-tabs { display: flex; height: 21px; align-items: flex-end; }
.table-tabs button { width: 121px; height: 19px; border: 1px solid #ccc; border-bottom: 0; color: #333; }
.table-tabs .on { width: 134px; margin-bottom: -1px; height: 22px; background: #fefefe; position: relative; }
.grid-box { flex: 1; min-height: 0; border: 1px solid #aaa; padding: 1px; }
.grid-inner { height: 100%; border: 1px solid #bbb; display: flex; flex-direction: column; }
.group-hint { height: 48px; flex: none; display: flex; align-items: center; justify-content: space-between; padding: 2px 13px 0 5px; }
.grid-clip { flex: 1; min-height: 0; overflow: hidden; }
.grid-clip table { table-layout: fixed; border-collapse: collapse; width: 1324px; min-width: 100%; }
col { width: 100px; } .c-sel { width: 24px; } .c-val { width: 300px; }
.grid-clip tr { height: 31px; }
.grid-clip thead tr { height: 30px; }
th { font-weight: normal; font-size: 12px; text-align: left; background: #bdbdbd; border-right: 1px solid #a4a4a4; border-bottom: 1px solid #999; padding: 0 0 0 5px; white-space: nowrap; overflow: hidden; }
.grid-clip th:first-child { background: #fefefe; }
.grid-clip td { padding: 0 4px; vertical-align: middle; white-space: nowrap; }
.grid-clip td.top { vertical-align: top; padding: 0; }
.grid-clip td:first-child { border: 1px solid #ccc; }
.grid-clip .fix { border-left: 3px solid #111; }
.grid-clip .sel td:not(:first-child) { background: linear-gradient(#f2f9f5, #ccd3d0); border-bottom: 1px solid #999; }
.grid-inner .hbar .thumb { width: 516px; }
.hbar .right { margin-left: auto; }
.measures { display: flex; margin-top: 20px; width: 99px; }
.vlabel { width: 28px; writing-mode: vertical-rl; transform: rotate(180deg); color: #222; line-height: 28px; padding-top: 7px; }
.measure-box { flex: 1; display: flex; border: 1px solid #aaa; padding: 1px; }
.measure-col { flex: 1; display: flex; flex-direction: column; justify-content: flex-end; overflow: hidden; }
.measure-col table { border-collapse: collapse; width: 100%; height: 145px; }
.measure-col tr { height: 30px; }
.measure-col tr:last-child { height: 22px; }
.measure-col td:first-child { width: 24px; border: 1px solid #ccc; background: #fff; }
.measure-col td { background: #e0e0e0; border-bottom: 2px solid #fff; padding: 0; }
.measure-col .sel td:last-child { background: linear-gradient(#cfdbd6, #9aa5a1); }
.measure-col .thumb { width: 12px; }
.vbar.meas { background: #fefefe; justify-content: flex-start; padding-bottom: 18px; }
.meas .thumb { height: 31px; margin-top: 43px; }
.meas .down { margin-top: auto; }

.right-tab { width: 23px; flex: none; border-left: 1px solid #bbb; padding-top: 3px; }
.right-tab button { writing-mode: vertical-rl; width: 22px; height: 184px; border-right: 1px solid #ccc; justify-content: flex-start; padding-top: 6px; font-size: 12px; color: #333; }

/* Status bar */
.status { height: 28px; flex: none; display: flex; align-items: center; justify-content: flex-end; gap: 17px; background: #217346; border-top: 1px solid #175c36; color: #fff; font-size: 12px; }
.page-no { display: flex; align-items: center; gap: 5px; color: #175535; }
.page-no input { width: 32px; height: 19px; border: 0; background: #fff; color: #333; padding: 0 2px; }
.status .fit { margin-left: -2px; }
.zoom { font-family: "Noto Sans", sans-serif; font-size: 13px; margin-left: -4px; }
.pct { color: #175535; margin-left: -7px; }
.status .minus { margin-left: -11px; }
.slider { appearance: none; width: 102px; height: 18px; background: none; margin: 0 -12px; }
.slider::-webkit-slider-runnable-track { height: 4px; background: #e6ece8; }
.slider::-webkit-slider-thumb { appearance: none; width: 12px; height: 12px; margin-top: -4px; background: #0a78d8; }
```
